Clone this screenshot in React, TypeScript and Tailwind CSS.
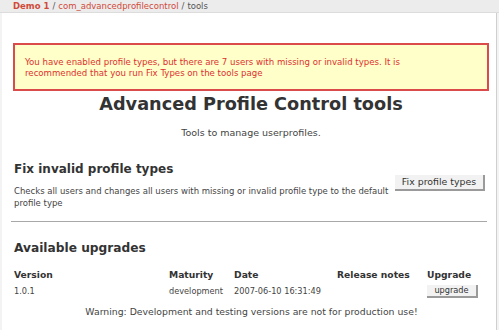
const font = { fontFamily: '"DejaVu Sans", Verdana, sans-serif' };

const columns = [
  { label: 'Version', w: 'w-[155px]' },
  { label: 'Maturity', w: 'w-[65px]' },
  { label: 'Date', w: 'w-[103px]' },
  { label: 'Release notes', w: 'w-[90px]' },
  { label: 'Upgrade', w: 'w-[52px]' },
];

function App() {
  return (
    <div className="flex h-[330px] w-[499px] flex-col overflow-hidden bg-[#f5f5f5] text-[#333]" style={font}>
      <div className="flex h-[13px] shrink-0 items-center border-b border-[#dcdcdc] bg-[#ececec] pl-[13px] text-[8.5px] leading-none">
        <span className="font-bold text-[#d04a3a]">Demo 1</span>
        <span className="px-[3px] text-[#555]">/</span>
        <span className="text-[#d04a3a]">com_advancedprofilecontrol</span>
        <span className="px-[3px] text-[#555]">/</span>
        <span className="text-[#555]">tools</span>
      </div>

      <div className="flex flex-1">
        <div className="w-[2px] bg-[#f3f3f3]" />
        <main className="flex-1 border-r border-[#cfcfcf] bg-white pl-[11px] pr-[7px] pt-[30px]">
          <div className="border-2 border-[#dc4b4b] bg-[#ffffc9] pl-[10px] pr-[40px] pb-[10px] pt-[12px] text-[8.6px] leading-[11px] text-[#dd3030]">
            You have enabled profile types, but there are 7 users with missing or invalid types. It is
            recommended that you run Fix Types on the tools page
          </div>

          <h1 className="mt-[3px] text-center text-[17.7px] font-bold leading-[21px] text-[#333]">
            Advanced Profile Control tools
          </h1>
          <p className="mt-[12px] text-center text-[9.5px] leading-[11px] text-[#444]">Tools to manage userprofiles.</p>

          <div className="mt-[24px] flex items-start pl-[1px]">
            <div className="w-[381px]">
              <h2 className="text-[12px] font-bold leading-[15px]">Fix invalid profile types</h2>
              <p className="mt-[9px] text-[8.5px] leading-[11.5px] text-[#444]">
                Checks all users and changes all users with missing or invalid profile type to the default profile type
              </p>
            </div>
            <button className="mt-[13px] h-[16px] w-[90px] border-b-2 border-r-2 border-[#9a9a9a] bg-[#f2f2f2] text-[9.4px] leading-none text-[#333]">
              Fix profile types
            </button>
          </div>

          <hr className="ml-[-2px] mr-[2px] mt-[12px] border-t border-[#a8a8a8]" />

          <h2 className="mt-[19px] pl-[1px] text-[12.2px] font-bold leading-[15px]">Available upgrades</h2>

          <div className="mt-[12px] pl-[1px]">
            <div className="flex h-[14px] items-center text-[9.2px] font-bold leading-none">
              {columns.map((c) => (
                <div key={c.label} className={c.w}>
                  {c.label}
                </div>
              ))}
            </div>
            <div className="flex h-[18px] items-center text-[8.2px] leading-none text-[#444]">
              <div className="w-[155px]">1.0.1</div>
              <div className="w-[65px]">development</div>
              <div className="w-[103px]">2007-06-10 16:31:49</div>
              <div className="w-[90px]" />
              <div className="w-[52px]">
                <button className="h-[13px] w-[51px] border-b-2 border-r-2 border-[#9a9a9a] bg-[#f2f2f2] text-[8.2px] leading-none text-[#333]">
                  upgrade
                </button>
              </div>
            </div>
            <p className="mt-[6px] text-center text-[9.3px] leading-[11px] text-[#444]">
              Warning: Development and testing versions are not for production use!
            </p>
          </div>
        </main>
        <div className="w-[2px] bg-[#f3f3f3]" />
      </div>
    </div>
  );
}

export default App;
